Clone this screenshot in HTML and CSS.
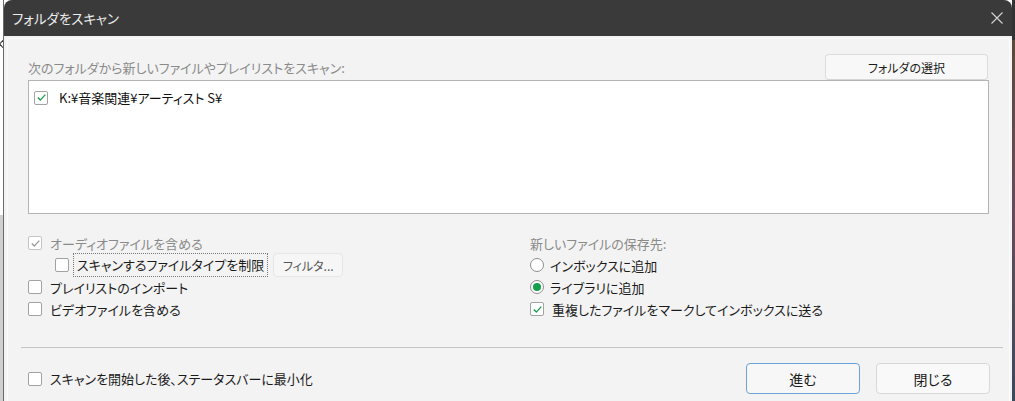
FILE: index.html
```html
<!DOCTYPE html>
<html lang="ja">
<head>
<meta charset="utf-8">
<title>フォルダをスキャン</title>
<link rel="stylesheet" href="styles.css">
</head>
<body>
<div class="desk">
  <div class="gutter"><span class="chev"></span></div>
  <div class="window">
    <div class="titlebar">
      <span class="title">フォルダをスキャン</span>
      <svg class="close" width="12" height="12" viewBox="0 0 12 12"><path d="M0.5 0.5 L11.5 11.5 M11.5 0.5 L0.5 11.5" stroke="#d4d4d4" stroke-width="1.1" fill="none"/></svg>
    </div>
    <div class="panel">
      <div class="head-row">
        <span class="muted">次のフォルダから新しいファイルやプレイリストをスキャン:</span>
        <button class="btn btn-folder">フォルダの選択</button>
      </div>
      <div class="listbox">
        <div class="item">
          <span class="cb checked"><svg width="11" height="11" viewBox="0 0 11 11"><path d="M1.8 5.6 L4.3 8.1 L9.3 2.6" stroke="#1e9e4c" stroke-width="1.4" fill="none"/></svg></span>
          <span class="item-text">K:¥音楽関連¥アーティスト S¥</span>
        </div>
      </div>
      <div class="options">
        <div class="col">
          <div class="opt disabled">
            <span class="cb dis"><svg width="11" height="11" viewBox="0 0 11 11"><path d="M1.8 5.6 L4.3 8.1 L9.3 2.6" stroke="#9a9a9a" stroke-width="1.4" fill="none"/></svg></span>
            <span class="lbl">オーディオファイルを含める</span>
          </div>
          <div class="opt indent">
            <span class="cb"></span>
            <span class="lbl focus">スキャンするファイルタイプを制限</span>
            <button class="btn btn-filter">フィルタ...</button>
          </div>
          <div class="opt">
            <span class="cb"></span>
            <span class="lbl">プレイリストのインポート</span>
          </div>
          <div class="opt">
            <span class="cb"></span>
            <span class="lbl">ビデオファイルを含める</span>
          </div>
        </div>
        <div class="col">
          <div class="opt"><span class="muted">新しいファイルの保存先:</span></div>
          <div class="opt">
            <span class="radio"></span>
            <span class="lbl r">インボックスに追加</span>
          </div>
          <div class="opt">
            <span class="radio on"></span>
            <span class="lbl r">ライブラリに追加</span>
          </div>
          <div class="opt">
            <span class="cb checked"><svg width="11" height="11" viewBox="0 0 11 11"><path d="M1.8 5.6 L4.3 8.1 L9.3 2.6" stroke="#1e9e4c" stroke-width="1.4" fill="none"/></svg></span>
            <span class="lbl">重複したファイルをマークしてインボックスに送る</span>
          </div>
        </div>
      </div>
      <div class="sep"></div>
      <div class="footer">
        <div class="opt">
          <span class="cb"></span>
          <span class="lbl">スキャンを開始した後、ステータスバーに最小化</span>
        </div>
        <div class="actions">
          <button class="btn btn-big default">進む</button>
          <button class="btn btn-big">閉じる</button>
        </div>
      </div>
    </div>
  </div>
  <div class="edge"></div>
</div>
</body>
</html>
```

FILE: styles.css
```css
* { box-sizing: border-box; }
html, body { margin: 0; padding: 0; }
body {
  width: 1015px;
  height: 401px;
  overflow: hidden;
  background: #ffffff;
  font-family: "Noto Sans CJK JP", "Noto Sans", sans-serif;
  font-size: 13px;
  color: #1b1b1b;
  font-feature-settings: "palt";
}
.desk {
  display: flex;
  height: 401px;
}
.gutter {
  width: 4px;
  flex: none;
  position: relative;
  background: linear-gradient(to bottom, #ffffff 0, #ffffff 215px, #d0d0d0 215px, #d0d0d0 100%);
  border-right: 1px solid #6a6a6a;
  overflow: hidden;
}
.chev {
  position: absolute;
  left: 0;
  top: 41px;
  width: 6px;
  height: 6px;
  border-left: 1px solid #333;
  border-bottom: 1px solid #333;
  transform: rotate(45deg);
}
.edge {
  flex: 1;
  background: linear-gradient(to bottom, #333 0, #333 40px, #5a4a3a 40px, #6a4a5a 50%, #3a4a5a 100%);
}
.window {
  width: 1008px;
  flex: none;
  background: #f3f3f3;
  border-radius: 8px 8px 0 0;
  overflow: hidden;
  display: flex;
  flex-direction: column;
}
.titlebar {
  height: 36px;
  background: #3a3a3a;
  display: flex;
  align-items: center;
  justify-content: space-between;
  padding: 0 9px 0 8px;
  flex: none;
}
.title {
  color: #ececec;
  font-size: 13.5px;
}
.panel {
  margin: 2px 2px 0 3px;
  border: 1px solid #fbfbfb;
  border-bottom: none;
  padding: 15px 20px 0 20px;
  flex: 1;
}
.muted { color: #8a8a8a; }
.head-row {
  display: flex;
  justify-content: space-between;
  align-items: center;
  height: 26px;
}
.btn {
  font-family: inherit;
  font-feature-settings: "palt";
  background: #f8f8f8;
  border: 1px solid #dcdcdc;
  border-radius: 4px;
  color: #1b1b1b;
  padding: 0;
  font-size: 12px;
}
.btn-folder {
  width: 163px;
  height: 26px;
  margin-right: 1px;
  border-bottom-color: #d6d6d6;
}
.listbox {
  height: 134px;
  background: #ffffff;
  border: 1px solid #b4b4b4;
  padding: 9px 0 0 5px;
}
.item {
  display: flex;
  align-items: center;
  height: 15px;
}
.item-text { margin-left: 11px; color: #111; }
.cb {
  width: 14px;
  height: 14px;
  flex: none;
  background: #fff;
  border: 1px solid #a2a2a2;
  border-radius: 2px;
  display: flex;
  align-items: center;
  justify-content: center;
}
.cb.dis { border-color: #c4c4c4; }
.options {
  margin-top: 18px;
  display: grid;
  grid-template-columns: 502px 1fr;
}
.opt {
  height: 22px;
  display: flex;
  align-items: center;
}
.lbl { margin-left: 8px; }
.lbl.r { margin-left: 6px; }
.disabled .lbl { color: #8a8a8a; }
.indent { padding-left: 27px; }
.indent .lbl { margin-left: 4px; }
.focus {
  border: 1px dotted #777;
  padding: 0 3px 0 3px;
  height: 24px;
  line-height: 22px;
}
.btn-filter {
  width: 70px;
  height: 24px;
  margin-left: 5px;
  border-color: #e6e6e6;
  color: #555;
  background: #f6f6f6;
}
.radio {
  width: 14px;
  height: 14px;
  flex: none;
  border: 1px solid #8f8f8f;
  border-radius: 50%;
  background: #fff;
  display: flex;
  align-items: center;
  justify-content: center;
}
.radio.on::after {
  content: "";
  width: 8px;
  height: 8px;
  border-radius: 50%;
  background: #14a04c;
}
.sep {
  height: 1px;
  background: #c6c6c6;
  margin: 27px -14px 0 -7px;
}
.footer {
  margin-top: 15px;
  display: flex;
  justify-content: space-between;
  align-items: center;
  height: 31px;
}
.actions {
  display: flex;
  gap: 16px;
  margin-right: -1px;
}
.btn-big {
  width: 114px;
  height: 31px;
  font-size: 14px;
  background: #f9f9f9;
  border-color: #d8d8d8;
}
.btn-big.default {
  border-color: #6aa3d9;
  background: #f7f7f7;
}
```
